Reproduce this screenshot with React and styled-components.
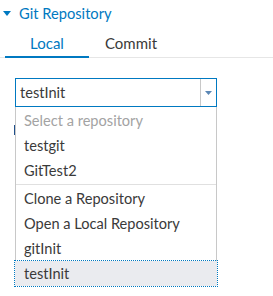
import React from "react";
import styled, { createGlobalStyle } from "styled-components";

const Global = createGlobalStyle`
  html, body { margin: 0; padding: 0; background: #fff; }
  body { font-family: Lato, "Noto Sans", "Liberation Sans", sans-serif; color: #3a3a3a; }
  * { box-sizing: border-box; }
`;

const Page = styled.div`
  width: 273px;
  height: 296px;
  overflow: hidden;
  position: relative;
`;

const Header = styled.div`
  display: flex;
  align-items: center;
  gap: 8px;
  height: 26px;
  padding: 0 0 0 3px;
  color: #0079c1;
  font-size: 14.7px;
  line-height: 26px;
`;

const Caret = styled.svg`
  width: 8px;
  height: 5px;
  display: block;
  margin-top: 1px;
`;

const Tabs = styled.div`
  display: flex;
  padding-left: 5px;
  border-bottom: 1px solid #e6e6e6;
  height: 32px;
`;

const Tab = styled.div`
  width: 84px;
  display: flex;
  align-items: center;
  justify-content: center;
  font-size: 15px;
  color: ${(p) => (p.$active ? "#0079c1" : "#3a3a3a")};
  border-bottom: 2px solid ${(p) => (p.$active ? "#0079c1" : "transparent")};
  margin-bottom: -1px;
  padding-top: 3px;
`;

const Body = styled.div`
  padding: 20px 0 0 15px;
`;

const SelectWrap = styled.div`
  position: relative;
  width: 202px;
`;

const SelectBox = styled.div`
  display: flex;
  height: 29px;
  border: 1px solid #0079c1;
  background: #fff;
`;

const SelectValue = styled.div`
  flex: 1;
  display: flex;
  align-items: center;
  padding-left: 4px;
  font-size: 14.6px;
  color: #3a3a3a;
`;

const ArrowCell = styled.div`
  width: 16px;
  border-left: 1px solid #c8c8c8;
  display: flex;
  align-items: center;
  justify-content: center;
`;

const Arrow = styled.svg`
  width: 7px;
  height: 4px;
  display: block;
  margin-left: -1px;
  margin-top: 1px;
`;

const Menu = styled.div`
  position: absolute;
  top: 100%;
  left: 0;
  width: 202px;
  background: #fff;
  border: 1px solid #c8c8c8;
  border-top: none;
  padding-top: 1px;
  z-index: 2;
`;

const Item = styled.div`
  height: 25px;
  display: flex;
  align-items: center;
  font-size: 14.6px;
  color: ${(p) => (p.$placeholder ? "#a3a3a3" : "#3a3a3a")};
  background: ${(p) => (p.$selected ? "#eaebef" : "transparent")};
  outline: ${(p) => (p.$selected ? "1px dotted #0079c1" : "none")};
  margin: ${(p) => (p.$selected ? "0 -1px -1px" : "0")};
  padding-left: ${(p) => (p.$selected ? "9px" : "8px")};
`;

const Separator = styled.div`
  height: 1px;
  background: #e0e0e0;
  margin: 1px 0;
`;

const BehindMark = styled.div`
  width: 2px;
  height: 10px;
  background: #1f4f8a;
  margin: 18px 0 0 -1px;
`;

export default function App() {
  return (
    <Page>
      <Global />
      <Header>
        <Caret viewBox="0 0 8 5">
          <path d="M0 0 L8 0 L4 5 Z" fill="#0079c1" />
        </Caret>
        <span>Git Repository</span>
      </Header>
      <Tabs>
        <Tab $active>Local</Tab>
        <Tab>Commit</Tab>
      </Tabs>
      <Body>
        <SelectWrap>
          <SelectBox>
            <SelectValue>testInit</SelectValue>
            <ArrowCell>
              <Arrow viewBox="0 0 7 4">
                <path d="M0 0 L7 0 L3.5 4 Z" fill="#5b87b5" />
              </Arrow>
            </ArrowCell>
          </SelectBox>
          <Menu>
            <Item $placeholder>Select a repository</Item>
            <Item>testgit</Item>
            <Item>GitTest2</Item>
            <Separator />
            <Item>Clone a Repository</Item>
            <Item>Open a Local Repository</Item>
            <Item>gitInit</Item>
            <Item $selected>testInit</Item>
          </Menu>
        </SelectWrap>
        <BehindMark />
      </Body>
    </Page>
  );
}
